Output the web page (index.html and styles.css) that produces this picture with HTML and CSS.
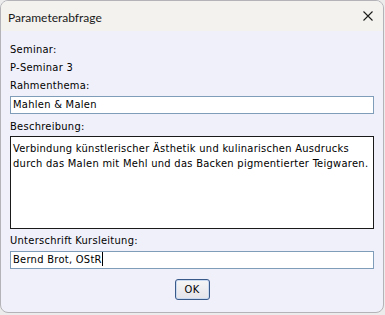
FILE: index.html
```html
<!DOCTYPE html>
<html>
<head>
<meta charset="utf-8">
<link rel="stylesheet" href="styles.css">
</head>
<body>
<div class="window">
  <div class="titlebar">
    <span class="title">Parameterabfrage</span>
    <svg class="close" width="10" height="10" viewBox="0 0 10 10"><path d="M0.5 0.5 L9.5 9.5 M9.5 0.5 L0.5 9.5" stroke="#1b1b1b" stroke-width="1.1" fill="none"/></svg>
  </div>
  <div class="content">
    <div class="label">Seminar:</div>
    <div class="label">P-Seminar 3</div>
    <div class="label">Rahmenthema:</div>
    <div class="field">Mahlen &amp; Malen</div>
    <div class="label label-gap">Beschreibung:</div>
    <div class="area">Verbindung künstlerischer Ästhetik und kulinarischen Ausdrucks<br>durch das Malen mit Mehl und das Backen pigmentierter Teigwaren.</div>
    <div class="label label-gap2">Unterschrift Kursleitung:</div>
    <div class="field">Bernd Brot, OStR<span class="caret"></span></div>
    <div class="actions"><button class="btn">OK</button></div>
  </div>
</div>
</body>
</html>
```

FILE: styles.css
```css
html, body {
  margin: 0;
  padding: 0;
  background: #ececec;
}
body {
  width: 385px;
  height: 315px;
  overflow: hidden;
}
.window {
  box-sizing: border-box;
  width: 384px;
  height: 313px;
  border: 1px solid #b4b4b8;
  border-radius: 8px;
  overflow: hidden;
  display: flex;
  flex-direction: column;
  background: #f0f0fa;
}
.titlebar {
  height: 30px;
  flex: none;
  background: #f3f2ee;
  display: flex;
  align-items: center;
  justify-content: space-between;
  padding: 0 10px 0 7px;
  font-family: Lato, "Noto Sans", sans-serif;
  font-size: 12px;
  color: #1a1a1a;
}
.title {
  position: relative;
  top: 1px;
}
.close {
  display: block;
  margin-top: -1px;
}
.content {
  flex: 1;
  padding: 10px 10px 0 9px;
  font-family: "DejaVu Sans Condensed", "DejaVu Sans", sans-serif;
  font-size: 11px;
  letter-spacing: 0.29px;
  color: #000;
}
.label {
  height: 18px;
  line-height: 18px;
}
.label-gap {
  margin-top: 4px;
}
.label-gap2 {
  margin-top: 3px;
}
.field {
  box-sizing: border-box;
  width: 364px;
  height: 18px;
  border: 1px solid #7f9db9;
  background: #fff;
  padding: 0 2px;
  line-height: 16px;
  margin-top: 1px;
  white-space: nowrap;
}
.caret {
  display: inline-block;
  width: 1px;
  height: 14px;
  background: #000;
  vertical-align: -3px;
}
.area {
  box-sizing: border-box;
  width: 364px;
  height: 93px;
  border: 1px solid #1a1a1a;
  background: #fff;
  padding: 4px 0 4px 2px;
  line-height: 15px;
  white-space: nowrap;
  overflow: hidden;
}
.actions {
  display: flex;
  justify-content: center;
  margin-top: 10px;
}
.btn {
  box-sizing: border-box;
  width: 35px;
  height: 21px;
  border: 1px solid #3a5a8a;
  border-radius: 3px;
  background: linear-gradient(#f6f6f6, #e4e4ea);
  box-shadow: inset 0 0 0 1px #c9d9f0;
  font-family: "DejaVu Sans Condensed", "DejaVu Sans", sans-serif;
  font-size: 11px;
  letter-spacing: 0.3px;
  color: #000;
  padding: 0;
  margin-left: 1px;
}
```
